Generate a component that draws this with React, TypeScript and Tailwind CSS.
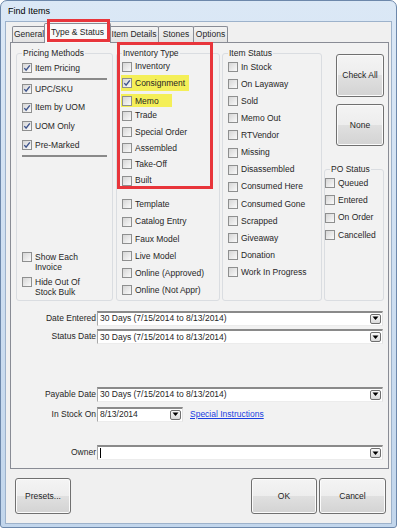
import type { ReactNode } from 'react'

const FONT = "font-['Liberation_Sans',Arial,sans-serif]"
const BTN =
  'flex items-center justify-center rounded-[3px] border border-[#707070] bg-[linear-gradient(#f4f4f4,#ededed_50%,#e0e0e0_50%,#d3d3d3)] shadow-[inset_0_0_0_1px_#fbfbfb] text-[#1e1e1e]'

function Box({ on }: { on?: boolean }) {
  return (
    <span className="flex h-[10px] w-[10px] shrink-0 items-center justify-center border border-[#8e8f8f] bg-linear-to-br from-[#d6d6d6] to-[#fafafa]">
      {on && (
        <svg width="8" height="8" viewBox="0 0 8 8">
          <path d="M1.3 4.1 L3.1 6.2 L6.8 1.4" fill="none" stroke="#3e548c" strokeWidth="1.4" />
        </svg>
      )}
    </span>
  )
}

function Item({ label, on, className = '' }: { label: ReactNode; on?: boolean; className?: string }) {
  return (
    <div className={`flex items-center gap-[3px] ${className}`}>
      <Box on={on} />
      <span className="whitespace-nowrap">{label}</span>
    </div>
  )
}

function Group({ title, className = '', children }: { title: string; className?: string; children?: ReactNode }) {
  return (
    <fieldset className={`flex flex-col rounded-[3px] border border-[#dadde1] ${className}`}>
      <legend className="ml-[5px] px-[1px] leading-[11px]">{title}</legend>
      {children}
    </fieldset>
  )
}

function Drop() {
  return (
    <span className="flex h-[10px] w-[11px] shrink-0 items-center justify-center rounded-[2px] border border-[#6f6f6f] bg-linear-to-b from-[#fafafa] to-[#d9d9d9]">
      <svg width="7" height="5" viewBox="0 0 7 5">
        <path d="M0.5 0.5 H6.5 L3.5 4 Z" fill="#000" />
      </svg>
    </span>
  )
}

function Combo({ value, className = '', caret }: { value: string; className?: string; caret?: boolean }) {
  return (
    <div
      className={`flex h-[15px] items-center border-t-2 border-l border-r border-b border-t-[#8a8a8a] border-l-[#a9a9a9] border-r-[#e2e2e2] border-b-[#ececec] bg-white pr-px pl-[2px] ${className}`}
    >
      {caret && <span className="h-[10px] w-px bg-black" />}
      <span className="flex-1 whitespace-nowrap">{value}</span>
      <Drop />
    </div>
  )
}

function Field({ label, children, className = '' }: { label: string; children: ReactNode; className?: string }) {
  return (
    <div className={`flex items-center ${className}`}>
      <span className="w-[86px] shrink-0 pr-px text-right whitespace-nowrap">{label}</span>
      {children}
    </div>
  )
}

export default function App() {
  const range = '30 Days (7/15/2014 to 8/13/2014)'
  return (
    <div className={`h-[529px] w-[400px] bg-white text-[8.5px] leading-none text-[#262626] ${FONT}`}>
      <div className="flex h-[528px] w-[397px] flex-col rounded-t-[7px] rounded-b-[3px] border border-[#6d88ab] bg-linear-to-b from-[#dbe8f6] to-[#c2d6ec]">
        <div className="flex h-[20px] shrink-0 items-center pt-px pl-[7px] text-[9px] text-black">Find Items</div>
        <div className="mx-[4px] mb-[3px] flex flex-1 flex-col border border-[#9db2cb] bg-[#f0f0f0]">
          {/* tab strip */}
          <div className="flex h-[20px] shrink-0 items-end pl-[6px]">
            <div className="flex h-[16px] w-[34px] items-center justify-center rounded-t-[2px] border border-b-0 border-[#898c95] bg-linear-to-b from-[#f3f3f3] to-[#e3e3e3]">
              General
            </div>
            <div className="relative z-10 -mx-[2px] -mb-px flex h-[20px] w-[67px] items-center justify-center rounded-t-[2px] border border-b-0 border-[#898c95] bg-[#f9f9f9] pb-[2px]">
              Type &amp; Status
              <div className="absolute -top-[5px] right-0 bottom-[1px] left-[2px] border-[3px] border-[#e8353b]" />
            </div>
            <div className="flex h-[16px] w-[50px] items-center justify-center rounded-t-[2px] border border-b-0 border-[#898c95] bg-linear-to-b from-[#f3f3f3] to-[#e3e3e3]">
              Item Details
            </div>
            <div className="-ml-px flex h-[16px] w-[36px] items-center justify-center rounded-t-[2px] border border-b-0 border-[#898c95] bg-linear-to-b from-[#f3f3f3] to-[#e3e3e3]">
              Stones
            </div>
            <div className="-ml-px flex h-[16px] w-[35px] items-center justify-center rounded-t-[2px] border border-b-0 border-[#898c95] bg-linear-to-b from-[#f3f3f3] to-[#e3e3e3]">
              Options
            </div>
          </div>

          {/* tab page */}
          <div className="ml-[4px] flex h-[427px] w-[379px] shrink-0 flex-col border border-[#898c95] bg-[#f2f2f2]">
            <div className="mt-[4.5px] ml-[5px] flex h-[253.5px] gap-[3px]">
              <Group title="Pricing Methods" className="w-[97px]">
                <div className="flex flex-1 flex-col pl-[5px]">
                  <Item label="Item Pricing" on className="h-[19px]" />
                  <div className="mr-[5px] h-[2px] bg-[#8a8a8a]" />
                  <Item label="UPC/SKU" on className="h-[18.7px]" />
                  <Item label="Item by UOM" on className="h-[18.7px]" />
                  <Item label="UOM Only" on className="h-[18.7px]" />
                  <Item label="Pre-Marked" on className="h-[18.7px]" />
                  <div className="mt-px mr-[5px] h-[2px] bg-[#8a8a8a]" />
                  <div className="mt-auto flex flex-col gap-[5px] pb-[3px] leading-[10px]">
                    <div className="flex items-start gap-[3px]">
                      <Box />
                      <span>
                        Show Each
                        <br />
                        Invoice
                      </span>
                    </div>
                    <div className="flex items-start gap-[3px]">
                      <Box />
                      <span>
                        Hide Out Of
                        <br />
                        Stock Bulk
                      </span>
                    </div>
                  </div>
                </div>
              </Group>

              <div className="relative flex w-[104px]">
                <Group title="Inventory Type" className="flex-1">
                  <div className="flex flex-col pl-[5px]">
                    <Item label="Inventory" className="h-[16.3px]" />
                    <Item label="Consignment" on className="-ml-px h-[16.3px] w-[68px] bg-[#f4ef58] pl-px" />
                    <div className="flex h-[16.3px] items-end">
                      <Item label="Memo" className="-ml-px h-[13px] w-[51px] bg-[#f4ef58] pl-px" />
                    </div>
                    <Item label="Trade" className="h-[16.3px]" />
                    <Item label="Special Order" className="h-[16.3px]" />
                    <Item label="Assembled" className="h-[16.3px]" />
                    <Item label="Take-Off" className="h-[16.3px]" />
                    <Item label="Built" className="h-[16.3px]" />
                    <Item label="Template" className="mt-[7px] h-[17.2px]" />
                    <Item label="Catalog Entry" className="h-[17.2px]" />
                    <Item label="Faux Model" className="h-[17.2px]" />
                    <Item label="Live Model" className="h-[17.2px]" />
                    <Item label="Online (Approved)" className="h-[17.2px]" />
                    <Item label="Online (Not Appr)" className="h-[17.2px]" />
                  </div>
                </Group>
                <div className="absolute -top-[5.5px] left-[1px] z-10 h-[147px] w-[96px] border-[3px] border-[#e8353b]" />
              </div>

              <Group title="Item Status" className="ml-[-1px] w-[100px]">
                <div className="flex flex-col pl-[5px]">
                  {[
                    'In Stock',
                    'On Layaway',
                    'Sold',
                    'Memo Out',
                    'RTVendor',
                    'Missing',
                    'Disassembled',
                    'Consumed Here',
                    'Consumed Gone',
                    'Scrapped',
                    'Giveaway',
                    'Donation',
                    'Work In Progress',
                  ].map((s) => (
                    <Item key={s} label={s} className="h-[17.1px]" />
                  ))}
                </div>
              </Group>

              <div className="ml-[-1px] flex w-[60px] flex-col">
                <button type="button" className={`${BTN} mt-[6.5px] ml-auto h-[43px] w-[48px]`}>
                  Check All
                </button>
                <button type="button" className={`${BTN} mt-[7px] ml-auto h-[42px] w-[48px]`}>
                  None
                </button>
                <Group title="PO Status" className="mt-[17.5px] flex-1">
                  <div className="flex flex-col pl-0">
                    {['Queued', 'Entered', 'On Order', 'Cancelled'].map((s) => (
                      <Item key={s} label={s} className="h-[17.3px]" />
                    ))}
                  </div>
                </Group>
              </div>
            </div>

            <Field label="Date Entered" className="mt-[9.5px]">
              <Combo value={range} className="w-[286px]" />
            </Field>
            <Field label="Status Date" className="mt-[3.5px]">
              <Combo value={range} className="w-[286px]" />
            </Field>
            <Field label="Payable Date" className="mt-[42.5px]">
              <Combo value={range} className="w-[286px]" />
            </Field>
            <Field label="In Stock On" className="mt-[5px]">
              <Combo value="8/13/2014" className="w-[86px]" />
              <a className="ml-[7px] text-[#1a3fe0] underline">Special Instructions</a>
            </Field>
            <Field label="Owner" className="mt-[23.5px]">
              <Combo value="" caret className="w-[286px]" />
            </Field>
          </div>

          {/* dialog buttons */}
          <div className="mt-[9px] flex h-[36px] pr-[5px] pl-[9px]">
            <button type="button" className={`${BTN} h-full w-[56px]`}>
              Presets...
            </button>
            <button
              type="button"
              className={`${BTN} ml-auto h-full w-[66px] border-[#3c7fb1] shadow-[inset_0_0_0_1px_#a6daf5,inset_0_0_0_2px_#e6f4fc]`}
            >
              OK
            </button>
            <button type="button" className={`${BTN} ml-[2px] h-full w-[67px]`}>
              Cancel
            </button>
          </div>
        </div>
      </div>
    </div>
  )
}
